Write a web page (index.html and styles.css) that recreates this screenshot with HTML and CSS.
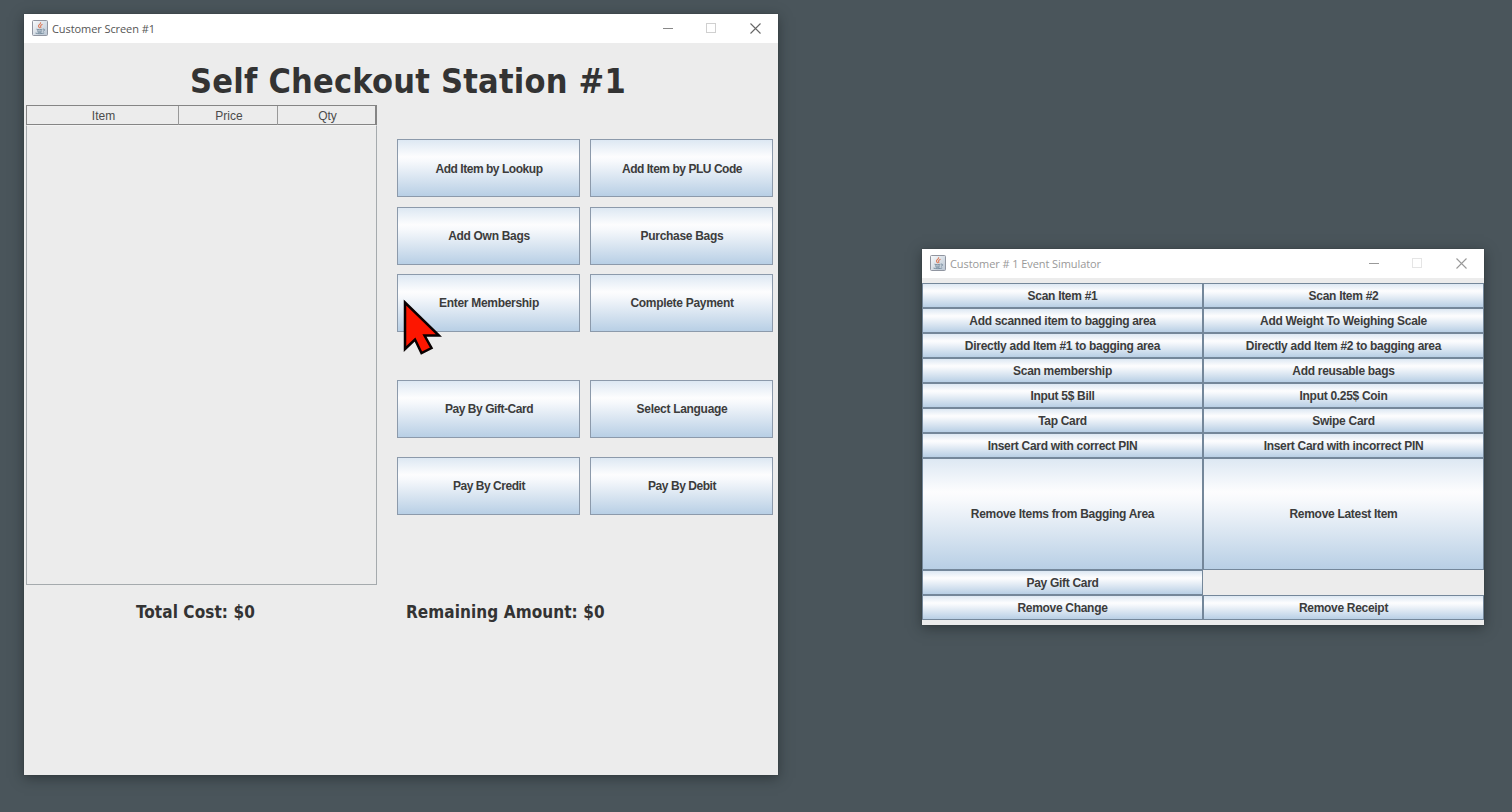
FILE: index.html
```
<!DOCTYPE html>
<html lang="en">
<head>
<meta charset="utf-8">
<title>Self Checkout Station</title>
<link rel="stylesheet" href="styles.css">
</head>
<body>
<svg width="0" height="0" class="defs">
  <defs>
    <linearGradient id="cup-bg" x1="0" y1="0" x2="1" y2="1"><stop offset="0" stop-color="#fafcfd"/><stop offset="1" stop-color="#b8c4d2"/></linearGradient>
    <symbol id="java" viewBox="0 0 16 16">
      <rect x=".5" y=".5" width="15" height="15" rx="1" fill="url(#cup-bg)" stroke="#9095a0"/>
      <path d="M8.6 2.2c.8 1.7-2.6 2.5-2.1 4 .2.8.9 1.2 1.2 1.9M10.5 4.3c-1.5.7-2.2 1.2-1.9 2.1.2.6.5 1 0 1.7" fill="none" stroke="#dc7957" stroke-width="1.1"/>
      <path d="M4.5 9.2c1.7.6 4.5.6 6 0M5 10.8c1.6.5 3.8.5 5.1 0M5.6 12.1c1.2.4 2.9.4 4 0M11 9.1c2.3-.4 2.1 1.9-.1 2.1M3.5 13.1c2.2.8 6.6.8 8.7-.2" fill="none" stroke="#6f8799" stroke-width=".9"/>
    </symbol>
    <symbol id="controls" viewBox="0 0 112 14">
      <path d="M7 7.5h10" stroke="var(--min)" fill="none"/>
      <rect x="50.5" y="2.5" width="9" height="9" stroke="var(--max)" fill="none"/>
      <path d="M94.5 2.5l10 10M104.5 2.5l-10 10" stroke="var(--close)" stroke-width="1.1" fill="none"/>
    </symbol>
  </defs>
</svg>

<main class="window customer">
  <header class="titlebar">
    <svg class="app-icon"><use href="#java"/></svg>
    <span class="caption">Customer Screen #1</span>
    <svg class="controls"><use href="#controls"/></svg>
  </header>
  <h1 class="heading"><span>Self Checkout Station #1</span></h1>
  <div class="content">
    <section class="cart">
      <div class="cart-head"><span>Item</span><span>Price</span><span>Qty</span></div>
      <div class="cart-body"></div>
    </section>
    <section class="actions">
      <button class="metal tight low">Add Item by Lookup</button><button class="metal tight low">Add Item by PLU Code</button>
      <button class="metal">Add Own Bags</button><button class="metal">Purchase Bags</button>
      <button class="metal">Enter Membership</button><button class="metal">Complete Payment</button>
      <button class="metal tight">Pay By Gift-Card</button><button class="metal">Select Language</button>
      <button class="metal tight">Pay By Credit</button><button class="metal tight">Pay By Debit</button>
    </section>
  </div>
  <footer class="totals"><span class="cost">Total Cost: $0</span><span class="remaining">Remaining Amount: $0</span></footer>
</main>

<section class="window simulator">
  <header class="titlebar">
    <svg class="app-icon"><use href="#java"/></svg>
    <span class="caption">Customer # 1 Event Simulator</span>
    <svg class="controls"><use href="#controls"/></svg>
  </header>
  <div class="events">
    <button class="metal">Scan Item #1</button><button class="metal">Scan Item #2</button>
    <button class="metal">Add scanned item to bagging area</button><button class="metal">Add Weight To Weighing Scale</button>
    <button class="metal">Directly add Item #1 to bagging area</button><button class="metal">Directly add Item #2 to bagging area</button>
    <button class="metal">Scan membership</button><button class="metal">Add reusable bags</button>
    <button class="metal">Input 5$ Bill</button><button class="metal">Input 0.25$ Coin</button>
    <button class="metal">Tap Card</button><button class="metal">Swipe Card</button>
    <button class="metal">Insert Card with correct PIN</button><button class="metal">Insert Card with incorrect PIN</button>
    <button class="metal">Remove Items from Bagging Area</button><button class="metal">Remove Latest Item</button>
    <button class="metal">Pay Gift Card</button><span></span>
    <button class="metal">Remove Change</button><button class="metal">Remove Receipt</button>
  </div>
</section>

<svg class="pointer" viewBox="0 0 40 58"><path d="M3 5.500V52L13 42.500L19.500 56L29.500 51L22.500 38.500L37 38.500Z" fill="#fd1600" stroke="#080000" stroke-width="2.500"/></svg>
</body>
</html>
```
FILE: styles.css
```
* { box-sizing: border-box; }
body {
  margin: 0;
  width: 1512px;
  height: 812px;
  overflow: hidden;
  position: relative;
  background: #4a555b;
  font-family: "Liberation Sans", Arial, sans-serif;
  color: #333;
}
.defs { position: absolute; }
.window {
  position: absolute;
  background: #ececec;
  box-shadow: 0 0 1px #30373a, 0 3px 12px rgba(20, 25, 27, .5);
}
.customer { left: 24px; top: 14px; width: 754px; height: 761px; --min: #888; --max: #d0d0d0; --close: #666; }
.simulator { left: 922px; top: 249px; width: 562px; height: 376px; --min: #999; --max: #e5e5e5; --close: #999; }
.titlebar {
  height: 29px;
  background: #fff;
  display: flex;
  align-items: center;
  padding: 0 10px 1px 8px;
}
.app-icon { width: 16px; height: 16px; }
.caption { margin-left: 4px; font: 11px/15px "Open Sans", sans-serif; color: #555; letter-spacing: -.08px; }
.simulator .caption { color: #999; }
.controls { width: 112px; height: 14px; margin-left: auto; }
.heading { margin: 0; height: 62px; padding: 14px 0 0 14px; text-align: center; color: #333; font: bold 34px/48px "DejaVu Sans Condensed", "DejaVu Sans", sans-serif; letter-spacing: .22px; }
.content { display: flex; gap: 20px; padding-left: 2px; }
.cart { width: 351px; height: 480px; display: flex; flex-direction: column; }
.cart-head {
  height: 20px;
  display: grid;
  grid-template-columns: 151px 99px 98px;
  border: 1px solid #858585;
  border-right-width: 2px;
  font-size: 12px;
  line-height: 20px;
  text-align: center;
  color: #4b4b4b;
}
.cart-head span { padding-left: 2px; }
.cart-head span + span { border-left: 1px solid #999; }
.cart-body { flex: 1; border: 1px solid #a5aaad; border-top: 1px solid #f4f4f4; }
.actions {
  padding-top: 34px;
  display: grid;
  grid-template-columns: 183px 183px;
  grid-template-rows: 68px 67px 106px 77px 58px;
  column-gap: 10px;
}
.actions .metal { height: 58px; }
.metal {
  margin: 0;
  padding: 0 0 0 1px;
  border: 1px solid #8c9aab;
  border-radius: 0;
  background: linear-gradient(#dde8f3, #fdfdfe 30%, #f7f9fc 38%, #b8cfe5);
  color: #3c3c3c;
  font: bold 12px/14px "Liberation Sans", Arial, sans-serif;
  letter-spacing: -.3px;
}
.metal.tight { letter-spacing: -.46px; }
.metal.low { padding-top: 2px; }
.totals { display: flex; height: 54px; align-items: center; padding-left: 112px; font: bold 17px "DejaVu Sans Condensed", "DejaVu Sans", sans-serif; letter-spacing: .08px; }
.cost { width: 270px; }
.events {
  padding-top: 5px;
  display: grid;
  grid-template-columns: 281px 281px;
  grid-template-rows: repeat(7, 25px) 112px 25px 25px;
}
.events .metal { border-color: #74879a; padding: 0; }
.pointer { position: absolute; left: 402px; top: 297px; width: 40px; height: 58px; }
```
